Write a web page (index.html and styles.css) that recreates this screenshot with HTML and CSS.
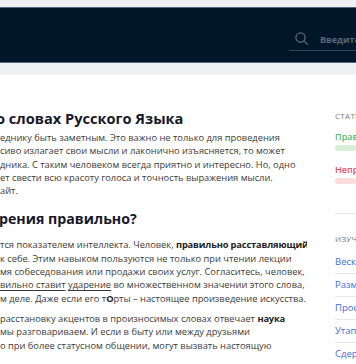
FILE: index.html
```html
<!DOCTYPE html>
<html lang="ru">
<head>
<meta charset="utf-8">
<link rel="stylesheet" href="styles.css">
</head>
<body>
<div class="top-band"></div>
<header class="header">
  <div class="search">
    <svg class="search-icon" width="13" height="13" viewBox="0 0 13 13" fill="none" stroke="#5b6878" stroke-width="1.3">
      <circle cx="5.5" cy="5.5" r="4.6"/>
      <path d="M8.9 8.9L12.3 12.3" stroke-linecap="round"/>
    </svg>
    <span class="search-text">Введите слово</span>
  </div>
</header>
<div class="sub-band"></div>
<div class="layout">
  <main class="article">
    <h2 class="title">о словах Русского Языка</h2>
    <p class="text">еднику быть заметным. Это важно не только для проведения<br>сиво излагает свои мысли и лаконично изъясняется, то может<br>дника. С таким человеком всегда приятно и интересно. Но, одно<br>ет свести всю красоту голоса и точность выражения мысли.<br>айт.</p>
    <h2 class="title title-2">рения правильно?</h2>
    <p class="text">тся показателем интеллекта. Человек, <b>правильно расставляющий</b><br>к себе. Этим навыком пользуются не только при чтении лекции<br>мя собеседования или продажи своих услуг. Согласитесь, человек,<br><a class="link">вильно ставит</a> <a class="link">ударение</a> во множественном значении этого слова,<br>м деле. Даже если его т<b>О</b>рты – настоящее произведение искусства.</p>
    <p class="text text-3">расстановку акцентов в произносимых словах отвечает <b>наука</b><br>мы разговариваем. И если в быту или между друзьями<br>о при более статусном общении, могут вызвать настоящую</p>
  </main>
  <aside class="sidebar">
    <div class="side-label">Статистика</div>
    <div class="stat stat-good">Правильно</div>
    <div class="bar bar-good"></div>
    <div class="stat stat-bad">Неправильно</div>
    <div class="bar bar-bad"></div>
    <div class="side-divider"></div>
    <div class="side-label side-label-2">Изучайте также</div>
    <ul class="links">
      <li><a>Вескость</a></li>
      <li><a>Размешивать</a></li>
      <li><a>Простыня</a></li>
      <li><a>Утаптывать</a></li>
      <li><a>Сдержанный</a></li>
    </ul>
  </aside>
</div>
</body>
</html>
```
FILE: styles.css
```css
* { box-sizing: border-box; }
html, body { margin: 0; padding: 0; }
body {
  width: 356px;
  height: 364px;
  overflow: hidden;
  background: #ffffff;
  font-family: "Open Sans", "Noto Sans", sans-serif;
  color: #333333;
}
.top-band { height: 7px; background: #eff0f4; }
.header {
  height: 56px;
  background: #011629;
  border-top: 1px solid #56667a;
  border-bottom: 1px solid #56667a;
  display: flex;
  justify-content: flex-end;
  align-items: flex-start;
}
.search {
  margin-top: 20px;
  width: 67px;
  height: 23px;
  border-bottom: 1px solid #34445a;
  display: flex;
  align-items: center;
  gap: 12px;
  padding-left: 6px;
  white-space: nowrap;
  overflow: hidden;
}
.search-icon { flex: none; margin-top: -1px; }
.search-text { font-size: 9px; font-weight: 700; color: #5b6878; }
.sub-band { height: 12px; background: #eff0f4; }
.layout {
  display: grid;
  grid-template-columns: 307px 1fr;
  column-gap: 28px;
  padding-top: 33px;
}
.article { overflow: hidden; }
.title {
  margin: 0 0 0 -4px;
  font-size: 14.6px;
  line-height: 20px;
  font-weight: 700;
  color: #16192a;
  white-space: nowrap;
}
.title-2 { margin-top: 12px; margin-left: -1px; font-size: 14.2px; }
.text {
  margin: 3px 0 0;
  font-size: 9.3px;
  line-height: 13.3px;
  white-space: nowrap;
  color: #3a3a3a;
}
.title-2 + .text { margin-top: 9px; }
.text-3 { margin-top: 7px; }
.text b { color: #222; letter-spacing: -0.15px; }
.link { text-decoration: underline; text-underline-offset: 2px; color: #3a3a3a; }
.sidebar { white-space: nowrap; overflow: hidden; margin-top: -1px; }
.side-label {
  font-size: 8px;
  line-height: 12px;
  text-transform: uppercase;
  color: #777a80;
  letter-spacing: 0.3px;
  margin-top: 3px;
}
.stat { font-size: 9px; line-height: 12px; font-weight: 600; margin-top: 9px; }
.stat-good { color: #57b86a; }
.stat-bad { color: #e0505a; margin-top: 13px; }
.bar { height: 6px; border-radius: 3px; margin-top: 2px; }
.bar-good { background: #d7eed9; }
.bar-bad { background: #fadcdc; }
.side-divider { height: 1px; background: #e6e8ec; margin-top: 29px; }
.side-label-2 { margin-top: 19px; }
.links { list-style: none; margin: 7px 0 0; padding: 0; }
.links li {
  font-size: 9.5px;
  line-height: 12px;
  padding: 4px 0 5px;
  border-bottom: 1px solid #e6e8ec;
  margin-bottom: 1px;
}
.links a { color: #3f6fd8; }
```
